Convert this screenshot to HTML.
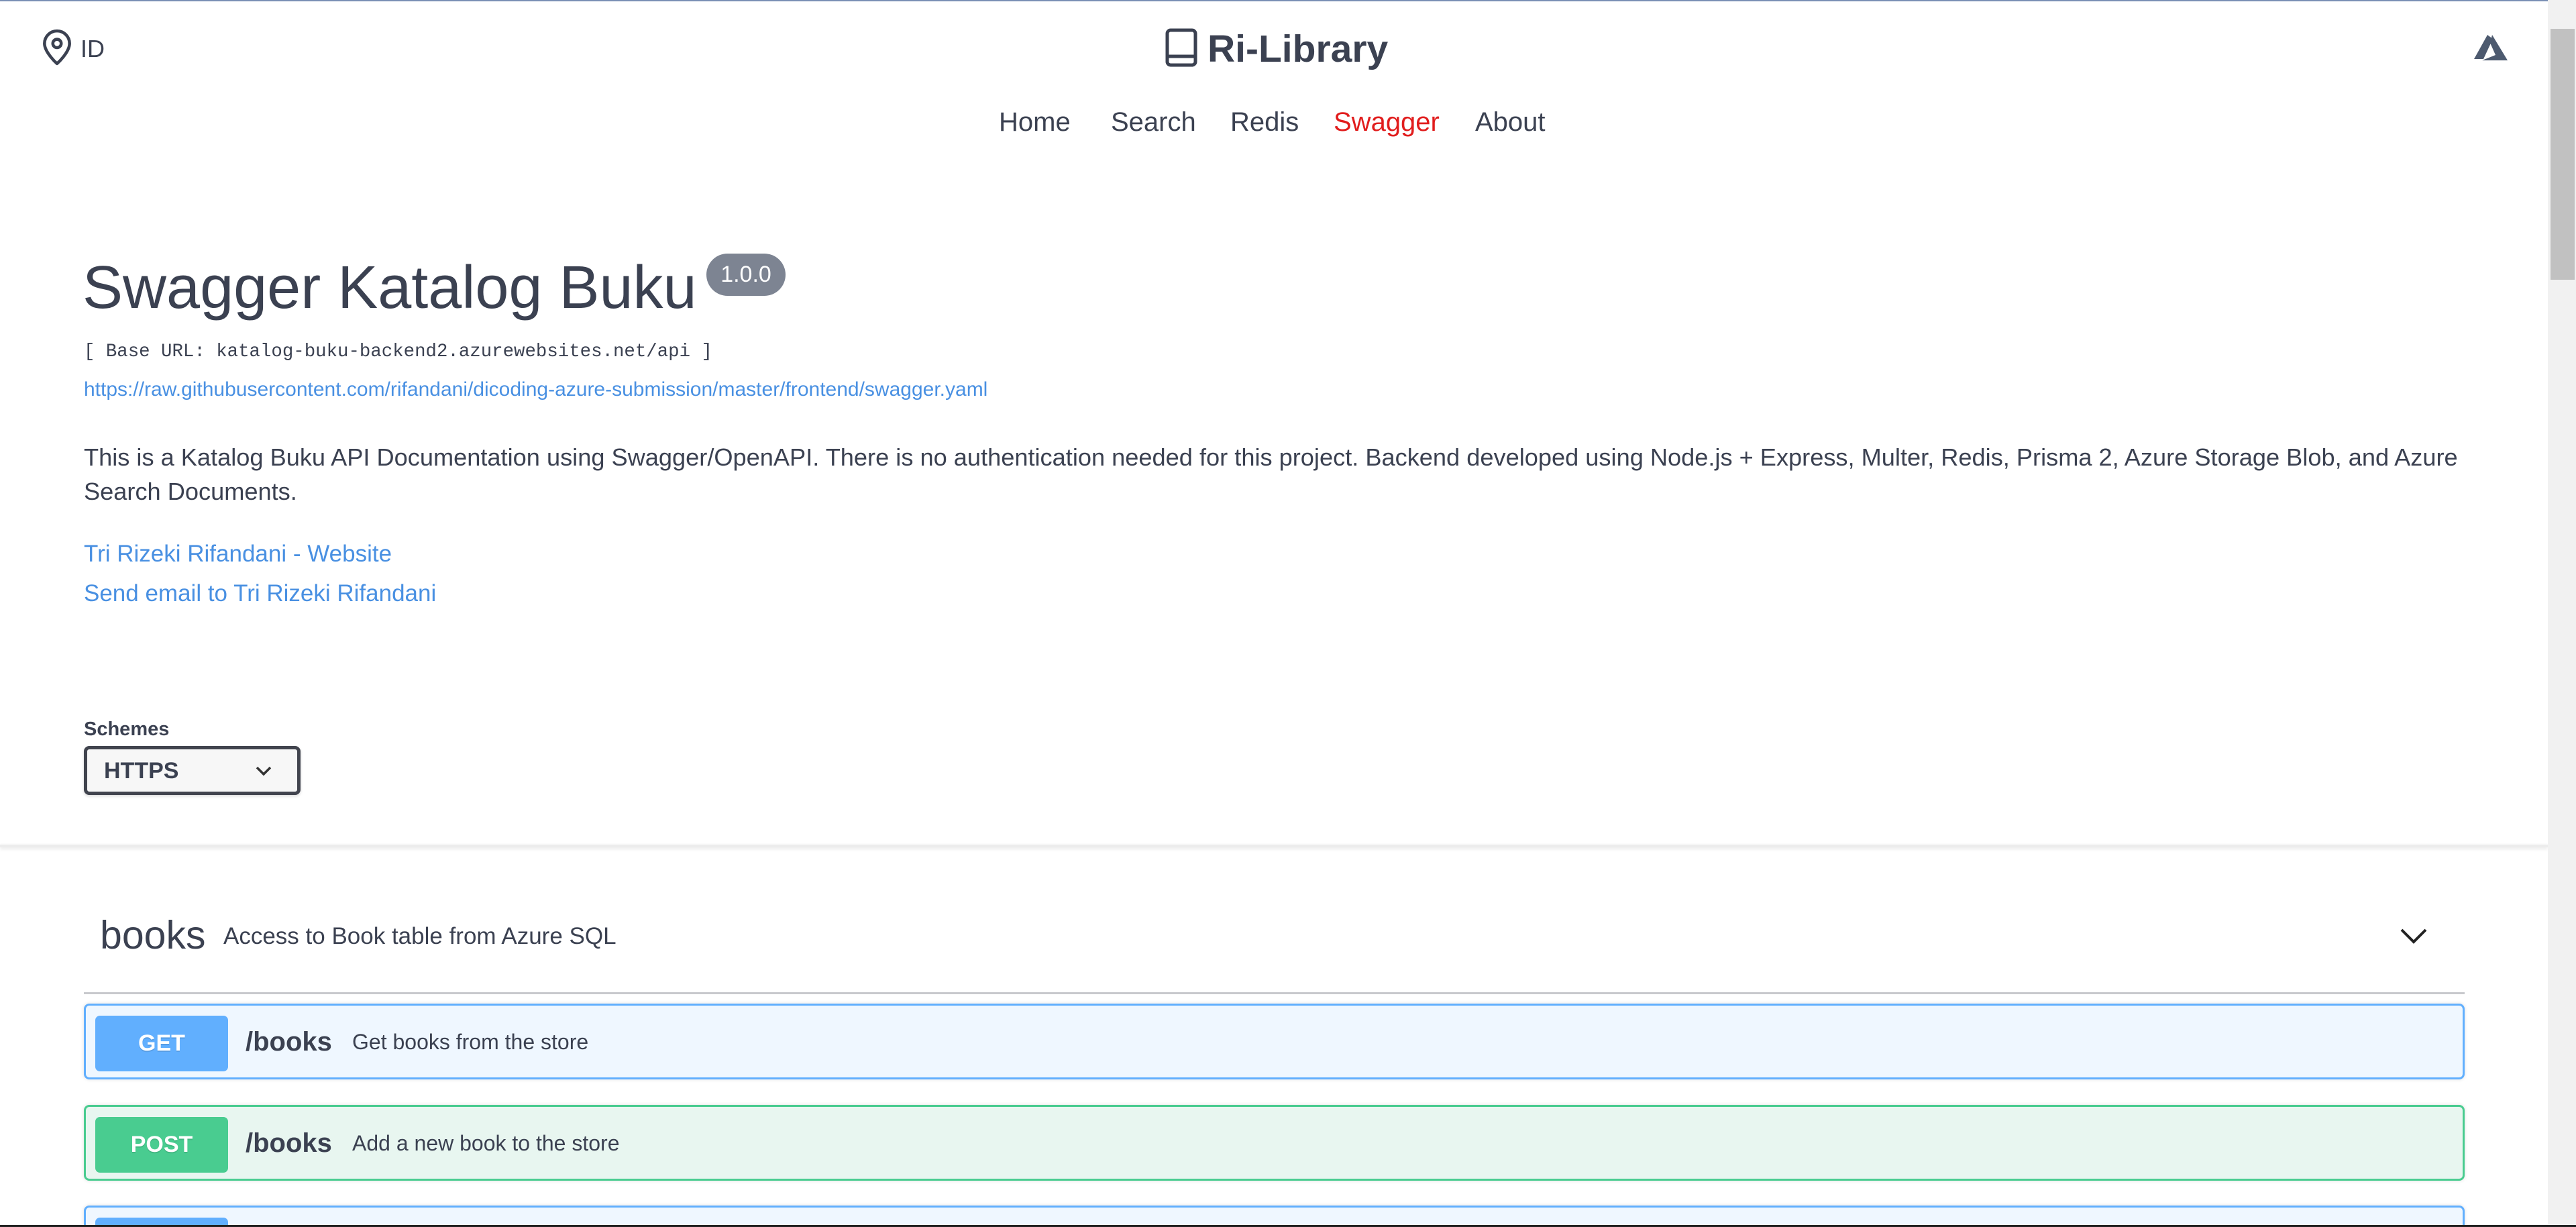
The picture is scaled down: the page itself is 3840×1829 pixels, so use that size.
<!DOCTYPE html>
<html><head><meta charset="utf-8"><style>
*{margin:0;padding:0;box-sizing:border-box}
html,body{width:3840px;height:1829px;overflow:hidden;background:#fff;font-family:"Liberation Sans",sans-serif;color:#3b4151}
#wrap{position:relative;width:3840px;height:1829px;overflow:hidden}
.abs{position:absolute}
.topline{left:0;top:0;width:3840px;height:2px;background:#7a8fb5}
.sb{left:3798px;top:0;width:42px;height:1829px;background:#f1f1f1}
.thumb{left:3802px;top:43px;width:36px;height:374px;background:#c1c1c1}
.nav a{position:absolute;top:160px;font-size:40px;color:#3b4151;text-decoration:none;white-space:nowrap}
.link{color:#4990e2;text-decoration:none}
.opblock{position:absolute;left:125px;width:3549px;height:113px;border-radius:8px;box-shadow:0 0 6px rgba(0,0,0,.12)}
.badge{position:absolute;left:14px;top:15px;width:198px;height:83px;border-radius:7px;color:#fff;font-weight:bold;font-size:34px;text-align:center;line-height:83px;text-shadow:0 2px 0 rgba(0,0,0,.1)}
.path{position:absolute;left:238px;top:32px;font-weight:bold;font-size:40px;color:#3b4151}
.sum{position:absolute;left:397px;top:36px;font-size:32px;color:#3b4151}
</style></head><body><div id="wrap">
<div class="abs topline"></div>

<svg class="abs" style="left:60px;top:43px" width="50" height="56" viewBox="0 0 24 27"><path d="M12 25C12 25 3 17 3 10.5A9 9 0 0 1 21 10.5C21 17 12 25 12 25Z" fill="none" stroke="#3b4151" stroke-width="2.2" stroke-linejoin="round"/><circle cx="12" cy="10.5" r="3" fill="none" stroke="#3b4151" stroke-width="2.2"/></svg>
<div class="abs" style="left:120px;top:52px;font-size:36px;color:#3b4151">ID</div>

<svg class="abs" style="left:1736px;top:42px" width="50" height="58" viewBox="0 0 50 58"><rect x="4" y="3" width="42" height="52" rx="5" fill="none" stroke="#3b4151" stroke-width="5"/><line x1="4" y1="42" x2="46" y2="42" stroke="#3b4151" stroke-width="5"/></svg>
<div class="abs" style="left:1800px;top:40px;font-size:57px;font-weight:bold;color:#3b4151">Ri-Library</div>

<svg class="abs" style="left:3686px;top:50px" width="54" height="44" viewBox="0 0 54 44"><path d="M22 2L2 38H16L30 8Z" fill="#4d5a6f"/><path d="M26 14L34 32L14 40H52L29 2Z" fill="#4d5a6f"/></svg>

<div class="nav">
<a style="left:1489px">Home</a>
<a style="left:1656px">Search</a>
<a style="left:1834px">Redis</a>
<a style="left:1988px;color:#e11d1d">Swagger</a>
<a style="left:2199px">About</a>
</div>

<div class="abs" style="left:123px;top:378px;font-size:90px;color:#3b4151;white-space:nowrap">Swagger Katalog Buku</div>
<div class="abs" style="left:1053px;top:378px;width:118px;height:63px;border-radius:32px;background:#7d8492;color:#fff;font-size:34px;text-align:center;line-height:63px">1.0.0</div>
<div class="abs" style="left:125px;top:509px;font-family:'Liberation Mono',monospace;font-size:27.4px;color:#3b4151;white-space:nowrap">[ Base URL: katalog-buku-backend2.azurewebsites.net/api ]</div>
<div class="abs link" style="left:125px;top:564px;font-size:30px;white-space:nowrap">https://raw.githubusercontent.com/rifandani/dicoding-azure-submission/master/frontend/swagger.yaml</div>
<div class="abs" style="left:125px;top:656px;width:3565px;font-size:36.2px;line-height:51px;color:#3b4151">This is a Katalog Buku API Documentation using Swagger/OpenAPI. There is no authentication needed for this project. Backend developed using Node.js + Express, Multer, Redis, Prisma 2, Azure Storage Blob, and Azure Search Documents.</div>
<div class="abs link" style="left:125px;top:806px;font-size:35px;white-space:nowrap">Tri Rizeki Rifandani - Website</div>
<div class="abs link" style="left:125px;top:865px;font-size:35px;white-space:nowrap">Send email to Tri Rizeki Rifandani</div>

<div class="abs" style="left:125px;top:1071px;font-size:29px;font-weight:bold;color:#3b4151">Schemes</div>
<div class="abs" style="left:125px;top:1112px;width:323px;height:73px;border:5px solid #41444e;border-radius:8px;background:#f7f7f7;box-shadow:0 2px 4px rgba(0,0,0,.15)">
<div style="position:absolute;left:25px;top:13px;font-size:34px;font-weight:bold;color:#3b4151">HTTPS</div>
<svg style="position:absolute;left:250px;top:22px" width="26" height="20" viewBox="0 0 26 20"><path d="M3 5L13 15L23 5" fill="none" stroke="#333" stroke-width="3.5"/></svg>
</div>

<div class="abs" style="left:0;top:1259px;width:3798px;height:4px;background:#ececec;box-shadow:0 2px 6px rgba(0,0,0,.12)"></div>

<div class="abs" style="left:149px;top:1360px;font-size:59px;color:#3b4151">books</div>
<div class="abs" style="left:333px;top:1376px;font-size:35px;color:#3b4151;white-space:nowrap">Access to Book table from Azure SQL</div>
<svg class="abs" style="left:3576px;top:1380px" width="44" height="30" viewBox="0 0 44 30"><path d="M4 6L22 24L40 6" fill="none" stroke="#222" stroke-width="4"/></svg>
<div class="abs" style="left:125px;top:1479px;width:3549px;height:3px;background:#c8c9cd"></div>

<div class="opblock" style="top:1496px;background:#eff7ff;border:3px solid #61affe">
<div class="badge" style="background:#61affe">GET</div>
<div class="path">/books</div><div class="sum">Get books from the store</div>
</div>
<div class="opblock" style="top:1647px;background:#e8f6f0;border:3px solid #49cc90">
<div class="badge" style="background:#49cc90">POST</div>
<div class="path">/books</div><div class="sum">Add a new book to the store</div>
</div>
<div class="opblock" style="top:1797px;background:#eff7ff;border:3px solid #61affe">
<div class="badge" style="background:#61affe"></div>
</div>

<div class="abs sb"></div>
<div class="abs thumb"></div>
<div class="abs" style="left:0;top:1826px;width:3840px;height:3px;background:#222"></div>
</div></body></html>
